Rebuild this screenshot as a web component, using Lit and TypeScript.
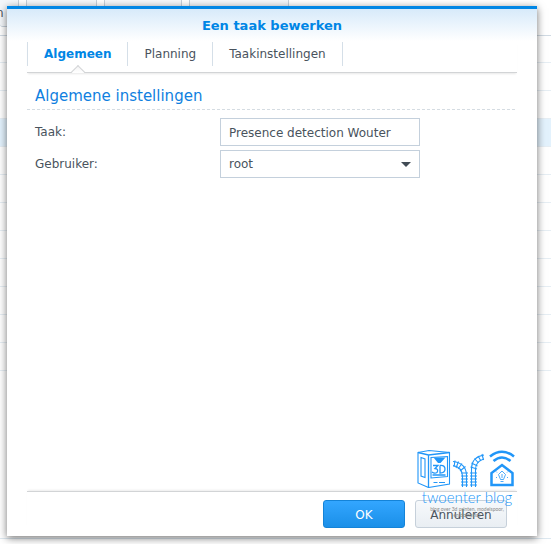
import { LitElement, html, css, svg } from "lit";
import { customElement, state } from "lit/decorators.js";

/** Line drawings of the blog's mark: a 3D printer, two rail tracks and a smart house. */
@customElement("blog-mark")
class BlogMark extends LitElement {
  static styles = css`
    :host {
      display: flex;
      flex-direction: column;
      align-items: center;
      width: 100px;
      color: #2196f8;
      pointer-events: none;
    }
    svg {
      display: block;
      width: 100px;
      height: 40px;
    }
    .name {
      font: 300 15px/18px Lato, sans-serif;
      white-space: nowrap;
    }
    .motto {
      font: 5px/6px Lato, sans-serif;
      color: #8a8a8a;
      white-space: nowrap;
      text-align: center;
    }
  `;

  render() {
    const sleepers = [37, 34, 31, 28, 25].map(
      (y) => svg`<path d="M44 ${y}h7M53 ${y}h7" />`
    );
    return html`
      <svg viewBox="0 0 100 40" fill="none" stroke="currentColor" stroke-width="1.1" aria-hidden="true">
        <path d="M1 4.500 12 2.500 32.500 4.500V36L11.500 39.500 1 35Z" />
        <path d="M1 4.500 11.500 7 32.500 4.500M11.500 7V39.500" stroke-width="1.300" />
        <path d="M4 9.500 8 11V29.500L4 28Z" />
        <path d="M14 9.500 30.500 8.500V28.500L14 30Z" />
        <path d="M16.500 9.500h12l-5 5.500h-2.500Z" fill="currentColor" stroke="none" />
        <path d="M16 17.500h5l-3 3q4 .5 2 4-2.500 1.500-5-.5M23 17.500v7.500q5 0 5-4t-5-3.500M15.500 27h13" stroke-width="1.300" />
        <path d="M16.500 34.500h4m1.500 0h6" stroke-width="1" />
        <path d="M45.500 39V28Q45 19 36 17.500M49.500 39V27Q49 15 36 13.500" />
        <path d="M54.500 39V20Q55 9 67 7M58.500 39V21Q59 13 67 11" />
        ${sleepers}
        <path d="M38 12.500 37 19M41.500 13.500 39 20M45 15.500 41 21M48.500 18.500 43 23" />
        <path d="M53.500 19 60 21M54.500 15 60.500 18M57.500 10.500 61.500 15M61 8 64 13M65 6 66.500 12" />
        <path d="M74.500 37V25L85 17 95.500 25V37Z" stroke-width="2.500" />
        <path d="M73 8.500Q85-1 97 8.500M76.500 13Q85 6 93.500 13" stroke-width="2.600" />
        <path d="M85 23 88.500 26.500 86.500 31.500H83.500L81.500 26.500ZM83.500 33.500h3M85 26v4M79 23.500l1 1m10 0 1-1M79 30l1-1m10 0 1 1" stroke-width=".8" />
      </svg>
      <div class="name">twoenter blog</div>
      <div class="motto">blog over 3d printen, modelspoor,<br />en domotica</div>
    `;
  }
}

@customElement("app-root")
export class AppRoot extends LitElement {
  @state() private tab = 0;

  private tabs = ["Algemeen", "Planning", "Taakinstellingen"];

  static styles = css`
    * {
      box-sizing: border-box;
    }
    :host {
      display: grid;
      grid-template: minmax(100vh, auto) / minmax(0, 1fr);
      overflow: hidden;
      background: #fff;
      color: #49535d;
      font: 12px/16px Verdana, "DejaVu Sans", sans-serif;
    }
    button, input, select {
      font: inherit;
      color: inherit;
      margin: 0;
    }
    .page, .dialog {
      grid-area: 1 / 1;
    }
    .page {
      display: flex;
      flex-direction: column;
      margin-bottom: 5px;
      border-bottom: 1px solid #dde8f0;
    }
    .toolbar {
      display: flex;
      gap: 7px;
      height: 36px;
      padding-bottom: 8px;
      border-bottom: 1px solid #d0dae3;
    }
    .tool {
      height: 27px;
      padding: 0;
      border: 1px solid #c6d0da;
      border-top: 0;
      border-radius: 0 0 3px 3px;
      background: #f4f7fa;
    }
    .t1 { width: 19px; border-left: 0; text-align: left; text-indent: -4px; }
    .t2 { width: 71px; }
    .t3 { width: 78px; }
    .t4 { width: 100px; }
    .row {
      height: 28px;
      border-bottom: 1px solid #e6eef4;
    }
    .row:first-of-type { height: 27px; }
    .row.selected { background: #e3f2fd; }
    .dialog {
      position: relative;
      display: flex;
      flex-direction: column;
      margin: 6px 14px 8px 7px;
      padding: 0 20px 8px;
      border-top: 3px solid #0086e5;
      background: #fff linear-gradient(#d7eafa, #fff) top / 100% 32px no-repeat;
      box-shadow: 0 2px 8px rgba(0, 0, 0, 0.55);
    }
    h1 {
      margin: 0;
      padding: 9px 0 8px;
      font-size: 13px;
      line-height: 16px;
      text-align: center;
      color: #0086e5;
    }
    .tabs {
      display: flex;
      height: 31px;
      padding-bottom: 7px;
      border-bottom: 1px solid #d2d4d6;
      box-shadow: 0 2px 2px -1px #e8e8e8;
    }
    .tab {
      position: relative;
      height: 24px;
      padding: 0 16px;
      border: 0;
      border-right: 1px solid #d5dfe8;
      background: none;
    }
    .tab:first-child { border-left: 1px solid #d5dfe8; }
    .tab.on { color: #0086e5; font-weight: bold; }
    .tab.on::after {
      content: "";
      position: absolute;
      left: 50%;
      bottom: -11px;
      width: 9px;
      height: 9px;
      margin-left: -5px;
      border: solid #d2d4d6;
      border-width: 1px 0 0 1px;
      background: linear-gradient(135deg, #f4f4f4, #fff 50%, transparent 50%);
      transform: rotate(45deg);
    }
    h2 {
      margin: 0;
      padding: 13px 8px 3px;
      font-size: 15px;
      font-weight: normal;
      line-height: 20px;
      color: #0f7fe0;
    }
    .dashes {
      height: 1px;
      background: repeating-linear-gradient(90deg, #d5dce2 0 3px, transparent 3px 5px);
    }
    .fields {
      flex: 1;
      display: grid;
      grid-template-columns: 185px minmax(0, 200px);
      align-content: start;
      gap: 4px 0;
      padding: 8px 8px 0;
    }
    label { padding-top: 6px; }
    .control {
      width: 100%;
      height: 28px;
      padding: 0 8px;
      border: 1px solid #c4d0dc;
      border-radius: 0;
      outline: 0;
      background: #fff;
    }
    input.control { padding-top: 1px; }
    select.control {
      appearance: none;
      padding-right: 24px;
    }
    .select {
      display: grid;
      align-items: center;
    }
    .select > * { grid-area: 1 / 1; }
    .caret {
      justify-self: end;
      margin-right: 9px;
      border: solid transparent;
      border-width: 5px 5px 0;
      border-top-color: #414b55;
      pointer-events: none;
    }
    .actions {
      display: flex;
      justify-content: flex-end;
      gap: 10px;
      padding: 8px 10px 0 0;
      border-top: 1px solid #d2d4d6;
      box-shadow: 0 -2px 2px -1px #ececec;
    }
    .action {
      height: 28px;
      padding: 1px 0 0;
      border: 1px solid #c6d0da;
      border-radius: 3px;
      background: linear-gradient(#f7f9fb, #e9eef3);
    }
    .ok {
      width: 82px;
      border-color: #1483d8;
      background: linear-gradient(#33a6ff, #1a8fe8);
      color: #fff;
    }
    .cancel { width: 92px; }
    blog-mark {
      position: absolute;
      right: 20px;
      bottom: 18px;
    }
  `;

  render() {
    return html`
      <div class="page">
        <nav class="toolbar">
          <button class="tool t1">n</button>
          <button class="tool t2" aria-label="Bewerken"></button>
          <button class="tool t3" aria-label="Uitvoeren"></button>
          <button class="tool t4" aria-label="Opslaan"></button>
        </nav>
        ${Array.from({ length: 12 }, (_, i) => html`<div class="row ${i === 3 ? "selected" : ""}"></div>`)}
      </div>
      <form class="dialog" role="dialog" aria-labelledby="title" @submit=${(e: Event) => e.preventDefault()}>
        <h1 id="title">Een taak bewerken</h1>
        <div class="tabs" role="tablist">
          ${this.tabs.map(
            (name, i) => html`<button type="button" role="tab" aria-selected=${i === this.tab}
              class="tab ${i === this.tab ? "on" : ""}" @click=${() => (this.tab = i)}>${name}</button>`
          )}
        </div>
        <h2>Algemene instellingen</h2>
        <div class="dashes"></div>
        <div class="fields">
          <label for="task">Taak:</label>
          <input class="control" id="task" type="text" value="Presence detection Wouter" />
          <label for="user">Gebruiker:</label>
          <div class="select">
            <select class="control" id="user"><option>root</option></select>
            <span class="caret"></span>
          </div>
        </div>
        <div class="actions">
          <button class="action ok">OK</button>
          <button class="action cancel" type="button">Annuleren</button>
        </div>
        <blog-mark></blog-mark>
      </form>
    `;
  }
}
